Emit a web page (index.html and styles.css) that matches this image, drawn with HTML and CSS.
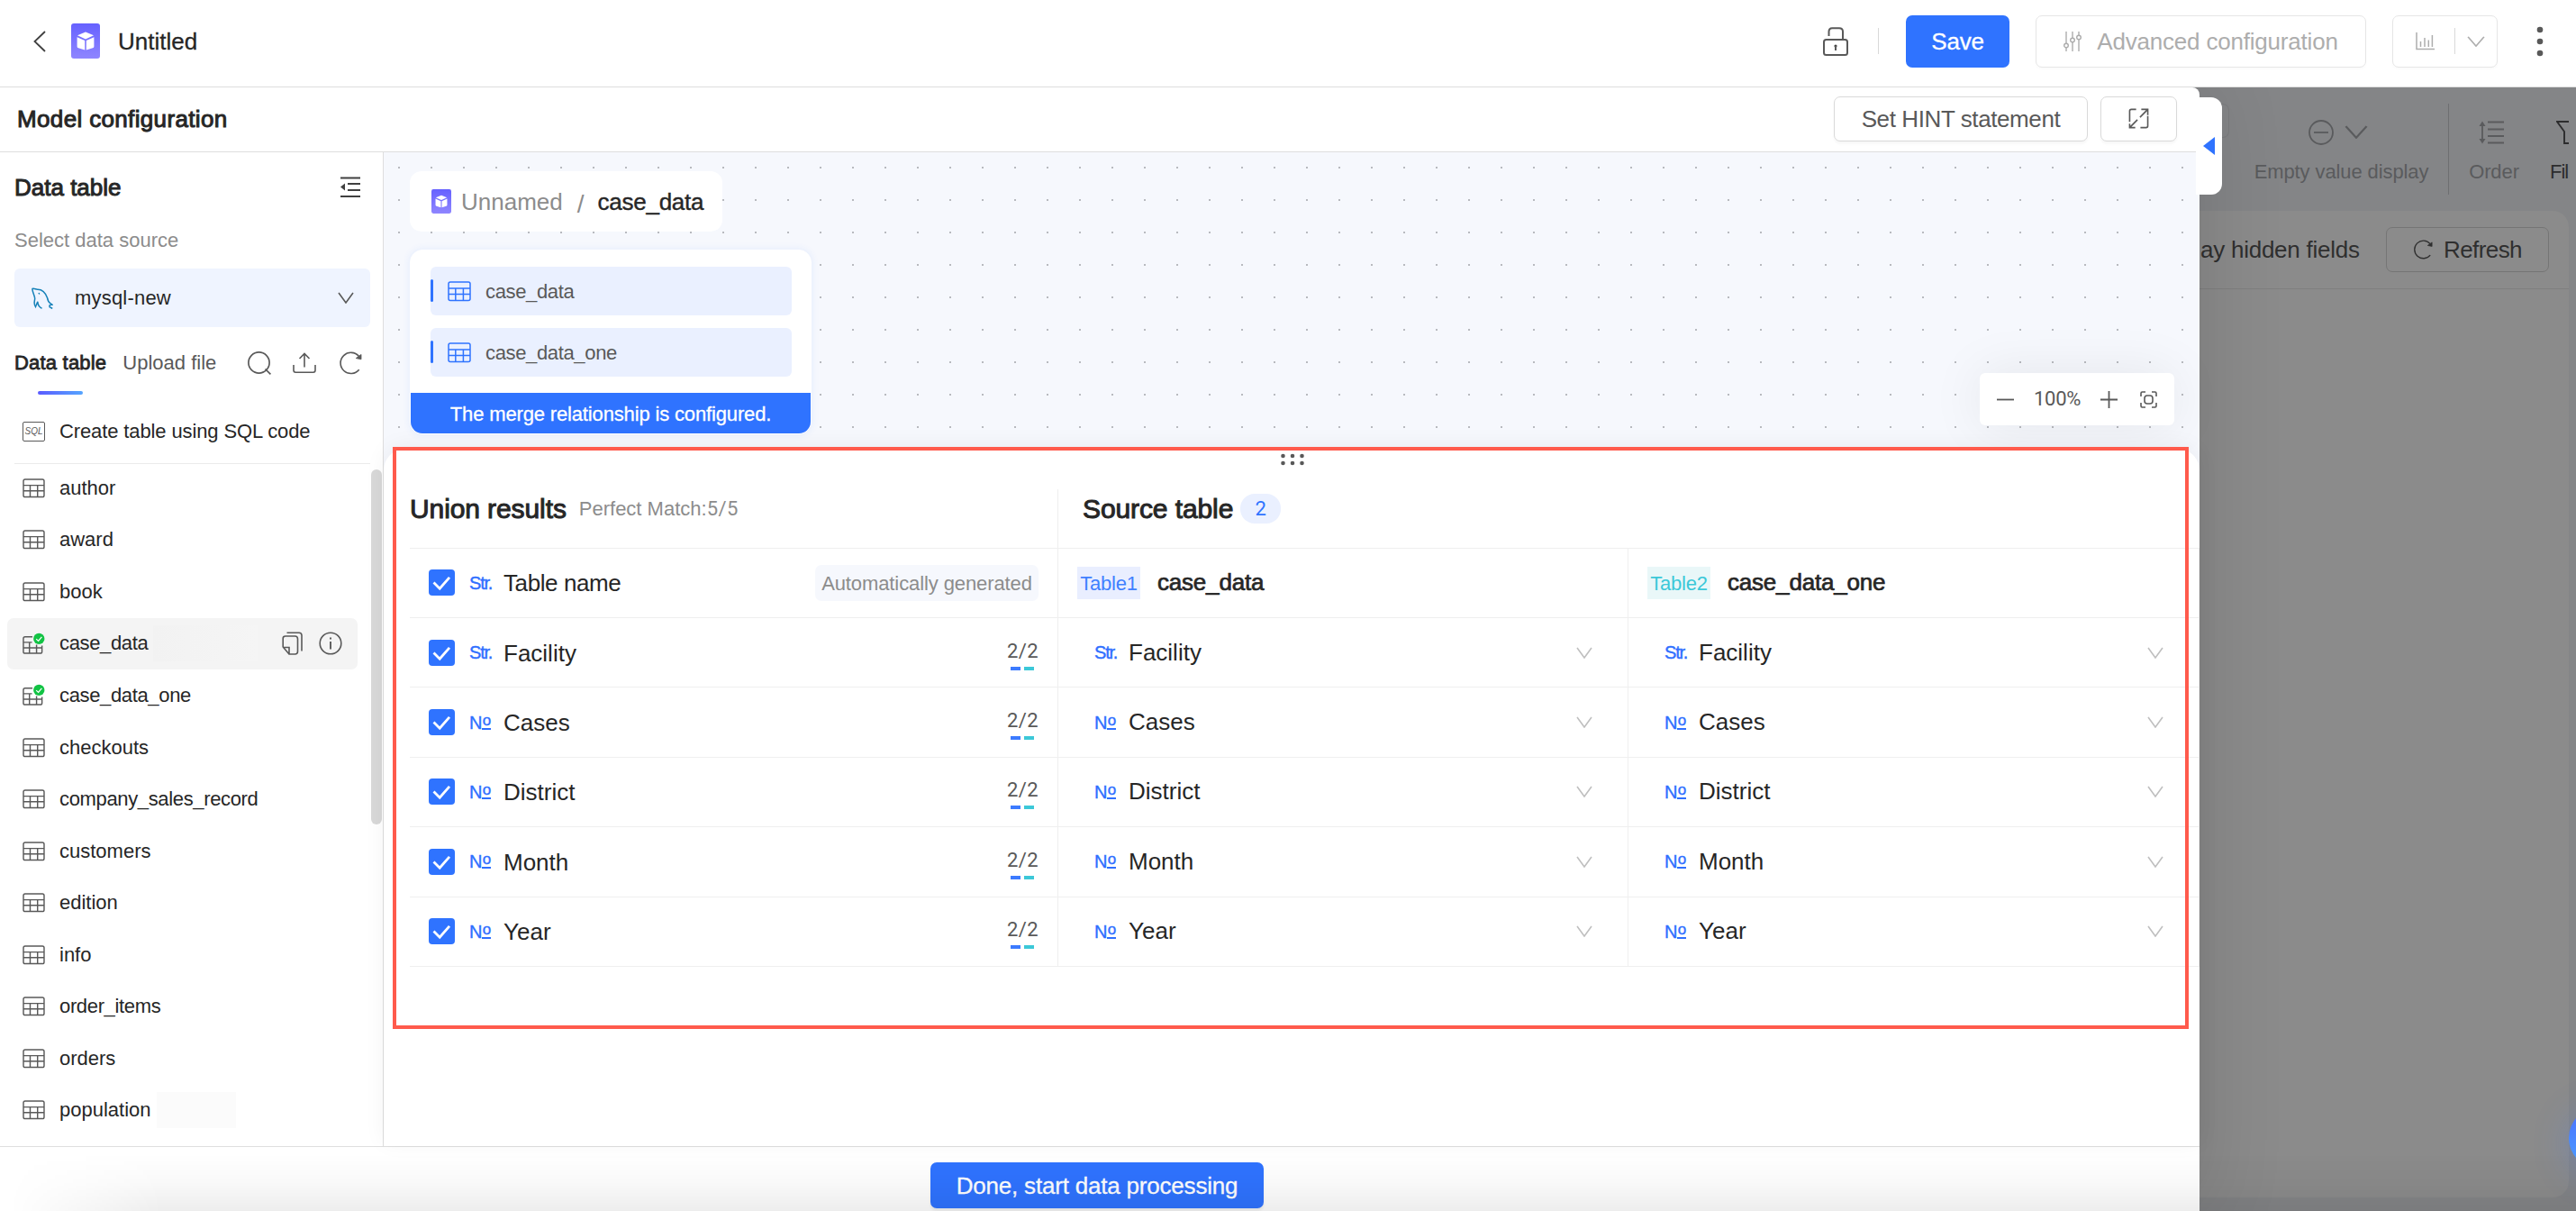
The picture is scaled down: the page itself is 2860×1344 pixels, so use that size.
FILE: index.html
```html
<!DOCTYPE html>
<html lang="en">
<head>
    <meta charset="UTF-8">
    <meta name="viewport" content="width=device-width, initial-scale=1.0">
    <title>Untitled - Model configuration</title>
    <link rel="stylesheet" href="styles.css">
</head>
<body>
    <svg class="symbols" width="0" height="0">
        <defs>
            <linearGradient id="cubeFill" x1="0" y1="0" x2="0" y2="1">
                <stop offset="0" stop-color="#6661ff"/>
                <stop offset="1" stop-color="#8f86ff"/>
            </linearGradient>
        </defs>
        <symbol id="cube" viewBox="0 0 32 39">
            <rect width="32" height="39" rx="3" fill="url(#cubeFill)"/>
            <path d="M16 9.5L25 13.3L16 17.4L7 13.3Z" fill="#fff"/>
            <path d="M6.6 15.2L15.2 19V29.4L8 27.3Q6.6 26.8 6.6 25.4Z M25.4 15.2L16.8 19V29.4L24 27.3Q25.4 26.8 25.4 25.4Z" fill="#fff"/>
        </symbol>
        <symbol id="table" viewBox="0 0 26 23">
            <rect x="1" y="1" width="24" height="20.5" rx="2" fill="none" stroke="currentColor" stroke-width="1.5"/>
            <path d="M1 8H25 M1 14.4H25 M8.8 8V21.5 M17.4 8V21.5" fill="none" stroke="currentColor" stroke-width="1.5"/>
        </symbol>
        <symbol id="table-used" viewBox="0 0 26 26">
            <path d="M11.5 5H3Q1 5 1 7V22Q1 24 3 24H20.5Q22.5 24 22.5 22V15 M1 11.3H11 M1 17.6H22.5 M8 11.3V24 M16.2 14V24" fill="none" stroke="currentColor" stroke-width="1.5"/>
            <circle cx="19" cy="7.2" r="6.4" fill="#12c344"/>
            <path d="M15.8 7.4L18.3 9.8L22.2 5" fill="none" stroke="#fff" stroke-width="1.3"/>
        </symbol>
        <symbol id="down" viewBox="0 0 18 13" preserveAspectRatio="none">
            <path d="M1 1L9 12L17 1" fill="none" stroke="currentColor" stroke-width="1.6"/>
        </symbol>
        <symbol id="reload" viewBox="0 0 26 26">
            <path d="M22.7 20.2A11.6 11.6 0 1 1 22.5 5.4" fill="none" stroke="currentColor" stroke-width="1.6"/>
            <path d="M19.2 7.6L25 3.4V8.8Z" fill="currentColor" stroke="currentColor" stroke-width="0.8"/>
        </symbol>
        <symbol id="check" viewBox="0 0 29 29">
            <path d="M5.5 14.5L12.2 21.2L23 8.8" fill="none" stroke="#fff" stroke-width="2.8"/>
        </symbol>
    </svg>

    <header class="topbar">
        <svg class="back" viewBox="0 0 14 24"><path d="M13 1L1.5 12L13 23" fill="none" stroke="#404040" stroke-width="1.8"/></svg>
        <svg class="logo"><use href="#cube"/></svg>
        <h1 class="doc-title">Untitled</h1>
        <div class="topbar-right">
            <svg class="lock" viewBox="0 0 28 32" fill="none" stroke="#595959" stroke-width="2">
                <path d="M6.5 10V5Q6.5 1.2 10.3 1.2H18Q22 1.2 22 5V14"/>
                <rect x="1" y="14" width="26" height="17" rx="2.5"/>
                <circle cx="14" cy="21" r="1.6" fill="#404040" stroke="none"/>
                <path d="M14 21V26"/>
            </svg>
            <span class="vline"></span>
            <button class="btn btn-primary save">Save</button>
            <button class="btn btn-ghost advanced">
                <svg viewBox="0 0 20 22" fill="none" stroke="currentColor" stroke-width="1.4">
                    <path d="M3 0V13 M3 18V22 M10 0V7 M10 12V22 M17 0V4 M17 9V22"/>
                    <circle cx="3" cy="15.5" r="2.3"/><circle cx="10" cy="9.5" r="2.3"/><circle cx="17" cy="6.5" r="2.3"/>
                </svg>
                Advanced configuration
            </button>
            <div class="btn btn-ghost chart-group">
                <svg class="chart" viewBox="0 0 21 20" fill="none" stroke="currentColor" stroke-width="1.5"><path d="M1 0V18.5H21 M5.5 10V16 M10 6V16 M14.3 8.5V16 M18.4 3V16"/></svg>
                <span class="vline"></span>
                <svg class="chart-down"><use href="#down"/></svg>
            </div>
            <svg class="more" viewBox="0 0 8 34" fill="#595959"><circle cx="4" cy="4" r="3.3"/><circle cx="4" cy="17" r="3.3"/><circle cx="4" cy="30" r="3.3"/></svg>
        </div>
    </header>

    <div class="stage">
        <section class="drawer">
            <div class="drawer-head">
                <h2>Model configuration</h2>
                <button class="btn btn-default hint">Set HINT statement</button>
                <button class="btn btn-default expand">
                    <svg viewBox="0 0 24 24" fill="none" stroke="#595959" stroke-width="1.7">
                        <path d="M1.5 16V3.5Q1.5 1.5 3.5 1.5H9 M22.5 9V20.5Q22.5 22.5 20.5 22.5H14 M15 1.5H22.5V8 M22.5 1.5L13.5 10.5 M1.5 18V22.5H8 M1.5 22.5L10.5 13.5"/>
                    </svg>
                </button>
            </div>

            <div class="drawer-body">
                <aside class="sidebar">
                    <div class="side-title">
                        <h3>Data table</h3>
                        <svg viewBox="0 0 24 24"><path d="M1 1.5H23 M9 8H23 M9 15H23 M1 22H23" stroke="#404040" stroke-width="2"/><path d="M6 7.5V15.5L1 11.5Z" fill="#404040"/></svg>
                    </div>
                    <p class="side-label">Select data source</p>
                    <div class="source">
                        <svg class="dolphin" viewBox="0 0 24 24" fill="none" stroke="#1580b8" stroke-width="1.5">
                            <path d="M3.5 11C2.5 7 0.5 3.5 1 1.5C2.5 0.6 5 2.3 6.5 2.2C12 2 15.5 6 17.5 11.5C18 14 18.5 16 20.5 17.3L23 19.2L20.2 19.6L20 21.5L23.2 23.5"/>
                            <path d="M3.5 11C4.5 14 2 16 3.5 19.5L4.5 21.5L6.8 15.8C7 19 8.5 22 11.5 23.3"/>
                            <path d="M8 6L8.8 7.5"/>
                        </svg>
                        <span>mysql-new</span>
                        <svg class="source-down"><use href="#down"/></svg>
                    </div>
                    <div class="tabs">
                        <span class="tab active">Data table</span>
                        <span class="tab">Upload file</span>
                        <svg viewBox="0 0 26 26" fill="none" stroke="currentColor" stroke-width="1.7"><circle cx="12.5" cy="12.5" r="11.6"/><path d="M19.5 19.5L25.4 25.4"/></svg>
                        <svg viewBox="0 0 26 26" fill="none" stroke="currentColor" stroke-width="1.6"><path d="M13 17.5V3 M7.5 8L13 2.5L18.5 8 M1 15V21Q1 23.2 3.2 23.2H22.8Q25 23.2 25 21V15"/></svg>
                        <svg><use href="#reload"/></svg>
                    </div>
                    <div class="sql-row">
                        <span class="sql-icon">SQL</span>
                        <span class="sql-text">Create table using SQL code</span>
                    </div>
                    <ul class="tables">
                        <li><svg><use href="#table"/></svg>author</li>
                        <li><svg><use href="#table"/></svg>award</li>
                        <li><svg><use href="#table"/></svg>book</li>
                        <li class="current">
                            <svg class="used"><use href="#table-used"/></svg><span class="snake">case_data</span>
                            <span class="mask mask-current"></span>
                            <svg class="copy" viewBox="0 0 24 26" fill="none" stroke="currentColor" stroke-width="1.6"><path d="M5.5 1.2H19Q22 1.2 22 4.2V21.5 M1.2 7.5V17L8 25H14.5Q17.5 25 17.5 22V8Q17.5 5 14.5 5H4Q1.2 5 1.2 7.5Z M1.2 17.5H8V25"/></svg>
                            <svg class="info" viewBox="0 0 26 26" fill="none" stroke="currentColor" stroke-width="1.6"><circle cx="13" cy="13" r="11.8"/><path d="M13 11V19.5 M13 6.5V8.6" stroke-width="1.9"/></svg>
                        </li>
                        <li><svg class="used"><use href="#table-used"/></svg><span class="snake">case_data_one</span></li>
                        <li><svg><use href="#table"/></svg>checkouts</li>
                        <li><svg><use href="#table"/></svg><span class="snake">company_sales_record</span></li>
                        <li><svg><use href="#table"/></svg>customers</li>
                        <li><svg><use href="#table"/></svg>edition</li>
                        <li><svg><use href="#table"/></svg>info</li>
                        <li><svg><use href="#table"/></svg><span class="snake">order_items</span></li>
                        <li><svg><use href="#table"/></svg>orders</li>
                        <li><svg><use href="#table"/></svg>population<span class="mask mask-population"></span></li>
                    </ul>
                    <span class="scrollbar"></span>
                </aside>

                <main class="workspace">
                    <div class="canvas">
                        <nav class="crumbs">
                            <svg><use href="#cube"/></svg>
                            <span class="crumb-parent">Unnamed</span>
                            <span class="crumb-sep">/</span>
                            <span class="crumb-current">case_data</span>
                        </nav>
                        <div class="union-node">
                            <div class="node-table"><svg><use href="#table"/></svg><span>case_data</span></div>
                            <div class="node-table"><svg><use href="#table"/></svg><span>case_data_one</span></div>
                            <div class="node-status">The merge relationship is configured.</div>
                        </div>
                        <div class="zoom">
                            <svg viewBox="0 0 19 19" stroke="#595959" stroke-width="1.8"><path d="M0 9.5H19"/></svg>
                            <span>100%</span>
                            <svg viewBox="0 0 19 19" stroke="#595959" stroke-width="1.8"><path d="M0 9.5H19 M9.5 0V19"/></svg>
                            <svg viewBox="0 0 19 19" fill="none" stroke="#595959" stroke-width="1.6"><path d="M1 6V2.5Q1 1 2.5 1H6 M13 1H16.5Q18 1 18 2.5V6 M18 13V16.5Q18 18 16.5 18H13 M6 18H2.5Q1 18 1 16.5V13"/><rect x="5" y="5" width="9" height="9" rx="3"/></svg>
                        </div>
                    </div>

                    <div class="panel">
                        <svg class="grip" viewBox="0 0 26 14" fill="#595959"><circle cx="2.5" cy="3" r="2.3"/><circle cx="13" cy="3" r="2.3"/><circle cx="23.5" cy="3" r="2.3"/><circle cx="2.5" cy="11" r="2.3"/><circle cx="13" cy="11" r="2.3"/><circle cx="23.5" cy="11" r="2.3"/></svg>
                        <div class="grid-head">
                            <div class="union-title"><h3>Union results</h3><span>Perfect Match:<span class="din">5/5</span></span></div>
                            <div class="source-title"><h3>Source table</h3><span class="badge">2</span></div>
                        </div>
                        <div class="grid-row head-row">
                            <div class="cell result"><span class="checkbox"><svg><use href="#check"/></svg></span><span class="type str">Str.</span><span class="field table-name">Table name</span><span class="auto">Automatically generated</span></div>
                            <div class="cell title"><span class="tag tag-1">Table1</span>case_data</div>
                            <div class="cell title"><span class="tag tag-2">Table2</span>case_data_one</div>
                        </div>
                        <div class="grid-row">
                            <div class="cell result"><span class="checkbox"><svg><use href="#check"/></svg></span><span class="type str">Str.</span><span class="field">Facility</span><span class="match">2/2<span class="bars"><i></i><i></i></span></span></div>
                            <div class="cell source-field"><span class="type str">Str.</span><span class="field">Facility</span><svg class="pick"><use href="#down"/></svg></div>
                            <div class="cell source-field"><span class="type str">Str.</span><span class="field">Facility</span><svg class="pick"><use href="#down"/></svg></div>
                        </div>
                        <div class="grid-row">
                            <div class="cell result"><span class="checkbox"><svg><use href="#check"/></svg></span><span class="type">N<sup>o</sup></span><span class="field">Cases</span><span class="match">2/2<span class="bars"><i></i><i></i></span></span></div>
                            <div class="cell source-field"><span class="type">N<sup>o</sup></span><span class="field">Cases</span><svg class="pick"><use href="#down"/></svg></div>
                            <div class="cell source-field"><span class="type">N<sup>o</sup></span><span class="field">Cases</span><svg class="pick"><use href="#down"/></svg></div>
                        </div>
                        <div class="grid-row">
                            <div class="cell result"><span class="checkbox"><svg><use href="#check"/></svg></span><span class="type">N<sup>o</sup></span><span class="field">District</span><span class="match">2/2<span class="bars"><i></i><i></i></span></span></div>
                            <div class="cell source-field"><span class="type">N<sup>o</sup></span><span class="field">District</span><svg class="pick"><use href="#down"/></svg></div>
                            <div class="cell source-field"><span class="type">N<sup>o</sup></span><span class="field">District</span><svg class="pick"><use href="#down"/></svg></div>
                        </div>
                        <div class="grid-row">
                            <div class="cell result"><span class="checkbox"><svg><use href="#check"/></svg></span><span class="type">N<sup>o</sup></span><span class="field">Month</span><span class="match">2/2<span class="bars"><i></i><i></i></span></span></div>
                            <div class="cell source-field"><span class="type">N<sup>o</sup></span><span class="field">Month</span><svg class="pick"><use href="#down"/></svg></div>
                            <div class="cell source-field"><span class="type">N<sup>o</sup></span><span class="field">Month</span><svg class="pick"><use href="#down"/></svg></div>
                        </div>
                        <div class="grid-row">
                            <div class="cell result"><span class="checkbox"><svg><use href="#check"/></svg></span><span class="type">N<sup>o</sup></span><span class="field">Year</span><span class="match">2/2<span class="bars"><i></i><i></i></span></span></div>
                            <div class="cell source-field"><span class="type">N<sup>o</sup></span><span class="field">Year</span><svg class="pick"><use href="#down"/></svg></div>
                            <div class="cell source-field"><span class="type">N<sup>o</sup></span><span class="field">Year</span><svg class="pick"><use href="#down"/></svg></div>
                        </div>
                    </div>
                    <div class="highlight"></div>
                </main>
            </div>

            <footer class="drawer-foot">
                <button class="btn btn-primary done">Done, start data processing</button>
            </footer>
            <div class="handle"><svg viewBox="0 0 13 20"><path d="M13 0V20L0 10Z" fill="#2f73ff"/></svg></div>
        </section>

        <section class="backdrop">
            <div class="tools">
                <span class="tool-edge"></span>
                <div class="tool empty-value">
                    <div class="tool-icons">
                        <svg class="minus" viewBox="0 0 28 28" fill="none" stroke="currentColor" stroke-width="1.8"><circle cx="14" cy="14" r="13"/><path d="M6 14H22"/></svg>
                        <svg class="tool-down"><use href="#down"/></svg>
                    </div>
                    <span>Empty value display</span>
                </div>
                <div class="tool order">
                    <div class="tool-icons"><svg viewBox="0 0 28 26" fill="none" stroke="currentColor" stroke-width="1.8"><path d="M4 2V24 M10 1.5H28 M10 9.5H28 M10 17H28 M10 24.5H28"/><path d="M0.5 6L4 0.5L7.5 6Z M0.5 20L4 25.5L7.5 20Z" fill="currentColor" stroke="none"/></svg></div>
                    <span>Order</span>
                </div>
                <div class="tool filter">
                    <div class="tool-icons"><svg viewBox="0 0 26 26" fill="none" stroke="currentColor" stroke-width="1.9"><path d="M25 1H1L9 12V25H17V12L25 1"/></svg></div>
                    <span>Fil</span>
                </div>
            </div>
            <div class="board">
                <div class="board-head">
                    <span class="hidden-fields">ay hidden fields</span>
                    <button class="btn refresh"><svg><use href="#reload"/></svg>Refresh</button>
                </div>
            </div>
            <span class="assistant"></span>
        </section>
        <div class="bottom-shade"></div>
    </div>
</body>
</html>
```

FILE: styles.css
```css
* {
    box-sizing: border-box;
}
body {
    margin: 0;
    width: 2860px;
    height: 1344px;
    overflow: hidden;
    background: #fff;
    color: #262626;
    font-family: "Liberation Sans", Arial, sans-serif;
    font-size: 22px;
    line-height: 1.2;
    white-space: nowrap;
}
h1, h2, h3, p, ul {
    margin: 0;
    padding: 0;
    font-weight: 400;
}
h2, h3 {
    font-size: 26px;
    -webkit-text-stroke: 1px currentColor;
}
svg {
    display: block;
    flex: none;
}
.symbols {
    position: absolute;
}

/* buttons */
.btn {
    display: flex;
    align-items: center;
    justify-content: center;
    flex: none;
    padding: 0;
    border: 1px solid #d9d9d9;
    border-radius: 7px;
    background: #fff;
    color: #595959;
    font-family: inherit;
    font-size: 26px;
    line-height: 1;
}
.btn-primary {
    border: none;
    background: #2f73ff;
    color: #fff;
    letter-spacing: -0.2px;
    -webkit-text-stroke: 0.3px currentColor;
}
.btn-ghost {
    border-color: #e6e6e6;
    color: #adadad;
    box-shadow: 0 2px 3px rgba(0, 0, 0, 0.02);
}
.btn-default {
    height: 50px;
    box-shadow: 0 3px 3px rgba(0, 0, 0, 0.03);
}

/* top bar */
.topbar {
    position: relative;
    z-index: 3;
    display: flex;
    align-items: center;
    height: 97px;
    padding: 0 36px 5px 37px;
    border-bottom: 1px solid #dedede;
    background: #fff;
}
.back {
    width: 14px;
    height: 24px;
}
.logo {
    width: 32px;
    height: 39px;
    margin: 0 20px 0 28px;
}
.doc-title {
    padding-top: 2px;
    font-size: 26px;
    -webkit-text-stroke: 0.3px currentColor;
}
.topbar-right {
    display: flex;
    align-items: center;
    margin-left: auto;
}
.vline {
    flex: none;
    width: 1px;
    height: 29px;
    background: #d9d9d9;
}
.lock {
    width: 28px;
    height: 32px;
    margin-right: 33px;
}
.save {
    width: 115px;
    height: 58px;
    margin-left: 30px;
}
.advanced {
    width: 367px;
    height: 58px;
    margin: 0 29px;
    gap: 17px;
    letter-spacing: -0.2px;
}
.advanced svg {
    width: 20px;
    height: 22px;
}
.chart-group {
    width: 117px;
    height: 58px;
    justify-content: flex-start;
    padding-left: 25px;
}
.chart {
    width: 21px;
    height: 20px;
    margin-right: 22px;
}
.chart-down {
    width: 20px;
    height: 12px;
    margin-left: 13px;
}
.more {
    width: 8px;
    height: 34px;
    margin-left: 43px;
}

/* drawer */
.stage {
    position: relative;
    display: flex;
    height: 1247px;
    background: #848587;
}
.drawer {
    position: relative;
    z-index: 1;
    display: flex;
    flex-direction: column;
    flex: none;
    width: 2442px;
    border-top-right-radius: 8px;
    background: #fff;
    box-shadow: 8px 0 90px rgba(0, 0, 0, 0.12);
}
.drawer-head {
    display: flex;
    align-items: center;
    height: 72px;
    padding: 0 25px 2px 19px;
    border-bottom: 1px solid #dedede;
}
.drawer-head h2 {
    margin-right: auto;
    padding-top: 2px;
    letter-spacing: 0.35px;
}
.hint {
    width: 282px;
    margin-right: 14px;
    padding-top: 1px;
    letter-spacing: -0.4px;
}
.expand {
    width: 85px;
}
.expand svg {
    width: 23px;
    height: 23px;
}
.drawer-body {
    display: flex;
    height: 1103px;
}
.drawer-foot {
    display: flex;
    justify-content: center;
    align-items: flex-start;
    height: 72px;
    padding: 17px 6px 0 0;
    border-top: 1px solid #dedede;
}
.done {
    width: 370px;
    height: 51px;
    box-shadow: 0 3px 3px rgba(0, 0, 0, 0.06);
}
.handle {
    position: absolute;
    top: 11px;
    right: -25px;
    display: flex;
    align-items: center;
    width: 29px;
    height: 108px;
    padding: 0 0 0 8px;
    border-radius: 0 12px 12px 0;
    background: #fff;
}
.handle svg {
    width: 13px;
    height: 20px;
}

/* sidebar */
.sidebar {
    position: relative;
    flex: none;
    width: 426px;
    padding: 23px 14px 0 16px;
    border-right: 1px solid #dedede;
}
.side-title {
    display: flex;
    justify-content: space-between;
    align-items: center;
    height: 32px;
    padding-right: 10px;
}
.side-title h3 {
    padding-top: 2px;
}
.side-title svg {
    width: 24px;
    height: 24px;
}
.side-label {
    margin-top: 30px;
    color: #8c8c8c;
}
.source {
    display: flex;
    align-items: center;
    height: 65px;
    margin-top: 18px;
    padding: 0 18px 0 19px;
    border-radius: 6px;
    background: #eff4ff;
}
.dolphin {
    width: 24px;
    height: 24px;
    margin-right: 24px;
}
.source span {
    letter-spacing: 0.2px;
}
.source-down {
    width: 18px;
    height: 13px;
    margin-left: auto;
    color: #595959;
}
.tabs {
    display: flex;
    align-items: center;
    height: 73px;
    margin-top: 3px;
    padding-right: 9px;
    color: #595959;
}
.tab {
    position: relative;
    margin-right: 18px;
}
.tab.active {
    color: #262626;
    letter-spacing: 0.2px;
    -webkit-text-stroke: 0.8px currentColor;
}
.tab.active::after {
    content: "";
    position: absolute;
    top: 44px;
    left: 26px;
    width: 50px;
    height: 4px;
    border-radius: 2px;
    background: linear-gradient(90deg, #5b5bff, #55a5ff);
}
.tabs svg {
    width: 26px;
    height: 26px;
    margin-right: 25px;
}
.tabs .tab + svg {
    margin: 0 24px 0 auto;
}
.tabs svg:last-child {
    margin-right: 0;
}
.sql-row {
    display: flex;
    align-items: center;
    height: 76px;
    padding: 5px 0 0 9px;
    border-bottom: 1px solid #ebebeb;
}
.sql-icon {
    display: flex;
    align-items: center;
    justify-content: center;
    width: 25px;
    height: 22px;
    margin-right: 16px;
    border: 1.5px solid #595959;
    border-radius: 2px;
    color: #595959;
    font-size: 10px;
    font-style: italic;
}
.sql-text {
    letter-spacing: -0.12px;
}
.tables {
    margin: -2.4px -1px 0 -8px;
    list-style: none;
}
.tables li {
    position: relative;
    display: flex;
    align-items: center;
    width: 389px;
    height: 57.55px;
    padding-left: 17px;
    border-radius: 7px;
    line-height: 28px;
}
.tables li.current {
    background: #f4f4f4;
}
.tables svg {
    width: 25px;
    height: 22px;
    margin-right: 16px;
    color: #595959;
}
.tables svg.used {
    height: 25px;
}
.snake {
    letter-spacing: -0.35px;
}
.mask {
    width: 88px;
    height: 40px;
    margin-left: 6px;
    background: #fbfbfb;
}
.mask-current {
    width: 116px;
    background: linear-gradient(90deg, #f2f2f2, #f5f5f5);
}
.tables svg.copy {
    width: 24px;
    height: 26px;
    margin: 0 17px 0 auto;
}
.tables svg.info {
    width: 26px;
    height: 26px;
    margin-right: 17px;
}
.scrollbar {
    position: absolute;
    top: 352px;
    right: 1px;
    width: 12px;
    height: 394px;
    border-radius: 6px;
    background: #d8d8d8;
}

/* canvas */
.workspace {
    position: relative;
    flex: 1;
    display: flex;
    flex-direction: column;
    background: #f6f8fd;
}
.canvas {
    position: relative;
    height: 329px;
    padding: 21px 28px 0 29px;
    background-color: #f6f8fd;
    background-image: conic-gradient(from 90deg at 34px 34px, #b8babf 90deg, transparent 0);
    background-size: 36px 36px;
    background-position: -18px -18px;
}
.crumbs {
    display: flex;
    align-items: center;
    width: 347px;
    height: 67px;
    padding-left: 24px;
    border-radius: 13px;
    background: #fff;
    font-size: 26px;
}
.crumbs svg {
    width: 22px;
    height: 27px;
}
.crumb-parent {
    margin-left: 11px;
    padding-top: 2px;
    color: #8c8c8c;
}
.crumb-sep {
    margin: 6px 15px 0 16px;
    color: #8c8c8c;
    font-size: 28px;
}
.crumb-current {
    padding-top: 2px;
    letter-spacing: -0.25px;
    -webkit-text-stroke: 0.4px currentColor;
}
.union-node {
    width: 446px;
    margin-top: 20px;
    padding: 18px 0 0;
    border: 1px solid #fff;
    border-radius: 14px;
    background: #fff;
    box-shadow: 0 0 8px rgba(47, 115, 255, 0.1);
    overflow: hidden;
}
.node-table {
    position: relative;
    display: flex;
    align-items: center;
    width: 401px;
    height: 54px;
    margin: 0 0 14px 22px;
    padding: 0 0 0 19px;
    border-radius: 6px;
    background: #eaf0ff;
    color: #595959;
    letter-spacing: -0.35px;
}
.node-table::before {
    content: "";
    position: absolute;
    top: 14px;
    left: 0;
    width: 3px;
    height: 25px;
    border-radius: 2px;
    background: #2f73ff;
}
.node-table span {
    padding-top: 2px;
}
.node-table svg {
    width: 26px;
    height: 23px;
    margin-right: 16px;
    color: #2f73ff;
}
.node-status {
    height: 45px;
    margin-top: 18px;
    background: #2f73ff;
    color: #fff;
    letter-spacing: -0.15px;
    line-height: 47px;
    text-align: center;
    -webkit-text-stroke: 0.3px currentColor;
}
.zoom {
    position: absolute;
    top: 245px;
    right: 28px;
    display: flex;
    align-items: center;
    width: 216px;
    height: 58px;
    padding-left: 19px;
    border-radius: 6px;
    background: #fff;
    box-shadow: 0 0 60px rgba(0, 0, 0, 0.08);
    color: #595959;
    font-family: Roboto, sans-serif;
}
.zoom svg {
    width: 19px;
    height: 19px;
}
.zoom span {
    width: 52px;
    margin: 0 22px 0 22px;
    letter-spacing: -0.3px;
}
.zoom svg:last-child {
    margin-left: 25px;
}

/* union panel */
.panel {
    position: relative;
    height: 774px;
    padding: 6px 0 0 29px;
    border-radius: 24px 24px 0 0;
    background: #fff;
    box-shadow: 0 -4px 24px rgba(0, 0, 0, 0.05);
}
.grip {
    width: 26px;
    height: 14px;
    margin: -1px 0 0 967px;
}
.grid-head {
    display: grid;
    grid-template-columns: 720px 1fr;
    height: 66px;
    margin-top: 25.6px;
    border-bottom: 1px solid #efefef;
}
.grid-head h3 {
    font-size: 30px;
    line-height: 44px;
    letter-spacing: -0.1px;
}
.union-title, .source-title {
    display: flex;
    align-items: flex-start;
}
.union-title {
    border-right: 1px solid #efefef;
    color: #8c8c8c;
    line-height: 44px;
}
.union-title h3 {
    margin-right: 14px;
    color: #262626;
}
.din {
    font-family: Roboto, sans-serif;
    letter-spacing: 0.5px;
}
.source-title {
    padding-left: 27px;
}
.badge {
    width: 45px;
    height: 33px;
    margin: 5px 0 0 8px;
    border-radius: 16px;
    background: #eaf0ff;
    color: #2f73ff;
    font-family: Roboto, sans-serif;
    line-height: 33px;
    text-align: center;
}
.grid-row {
    display: grid;
    grid-template-columns: 720px 633px 634px;
    height: 77.4px;
    border-bottom: 1px solid #efefef;
}
.cell {
    display: flex;
    align-items: center;
    border-right: 1px solid #efefef;
    font-size: 26px;
}
.result {
    padding: 0 21px 0 21px;
}
.checkbox {
    width: 29px;
    height: 29px;
    margin-right: 16px;
    border-radius: 4px;
    background: #2f73ff;
}
.checkbox svg {
    width: 29px;
    height: 29px;
}
.type {
    width: 38px;
    color: #2f6fff;
    font-size: 20px;
    line-height: 24px;
    -webkit-text-stroke: 0.4px currentColor;
}
.type.str {
    letter-spacing: -1.2px;
}
.type sup {
    display: inline-block;
    width: 10px;
    padding-bottom: 2px;
    border-bottom: 2px solid currentColor;
    font-size: 17px;
    line-height: 12px;
    text-align: center;
    vertical-align: 4px;
}
.field {
    padding-top: 2px;
}
.table-name {
    padding-top: 1px;
    letter-spacing: -0.4px;
}
.auto {
    width: 248px;
    height: 40px;
    margin-left: auto;
    border-radius: 7px;
    background: #f6f8fd;
    color: #8c8c8c;
    font-size: 22px;
    letter-spacing: -0.1px;
    line-height: 41px;
    text-align: center;
}
.match {
    display: flex;
    flex-direction: column;
    align-items: center;
    margin-left: auto;
    padding-top: 5px;
    color: #595959;
    font-family: Roboto, sans-serif;
    font-size: 22px;
    letter-spacing: 0.4px;
    line-height: 26px;
}
.bars {
    display: flex;
    gap: 4px;
    margin-top: 4px;
}
.bars i {
    width: 11px;
    height: 4px;
    background: #3c7bff;
}
.bars i + i {
    background: #3cc8d8;
}
.title {
    padding-left: 21px;
    letter-spacing: -0.2px;
    -webkit-text-stroke: 0.7px currentColor;
}
.tag {
    width: 70px;
    height: 36px;
    margin-right: 19px;
    font-size: 22px;
    line-height: 37px;
    text-align: center;
    -webkit-text-stroke: 0;
}
.tag-1 {
    background: #e9eeff;
    color: #4080ff;
}
.tag-2 {
    background: #e9f7f8;
    color: #3cc8d8;
}
.source-field {
    padding: 0 39px 0 40px;
}
.source-field .field {
    padding-top: 0;
}
.pick {
    width: 18px;
    height: 13px;
    margin-left: auto;
    color: #bfbfbf;
}
.highlight {
    position: absolute;
    top: 327px;
    left: 10px;
    width: 1994px;
    height: 646px;
    border: 4px solid #ff5a4c;
}

/* dimmed page behind the drawer */
.backdrop {
    position: relative;
    flex: 1;
    padding-right: 8px;
    overflow: hidden;
}
.tools {
    display: flex;
    height: 137px;
    padding-top: 18px;
    overflow: hidden;
    color: #5a5b5d;
}
.tool-edge {
    flex: none;
    width: 33px;
    height: 38px;
    border: 1px solid #7b7c7e;
    border-left: none;
    border-radius: 0 7px 7px 0;
}
.tool {
    display: flex;
    flex-direction: column;
    align-items: center;
    flex: none;
    height: 101px;
    letter-spacing: -0.1px;
}
.tool-icons {
    display: flex;
    align-items: center;
    gap: 12px;
    height: 63px;
}
.empty-value {
    width: 244px;
    padding-left: 6px;
    border-right: 1px solid #6e6f71;
}
.empty-value .tool-icons {
    padding-right: 7px;
}
.minus {
    width: 28px;
    height: 28px;
}
.tool-down {
    width: 26px;
    height: 15px;
}
.order {
    width: 100px;
}
.order .tool-icons {
    padding-right: 6px;
}
.order svg {
    width: 28px;
    height: 26px;
}
.filter {
    align-items: flex-start;
    margin-left: 12px;
    color: #2c2c2d;
    letter-spacing: -1px;
}
.filter svg {
    width: 26px;
    height: 26px;
    margin-left: 7px;
}
.board {
    height: 1095px;
    border-radius: 0 18px 18px 0;
    background: #8b8b8b;
}
.board-head {
    display: flex;
    align-items: center;
    height: 87px;
    padding: 0 22px 1px 1px;
    border-bottom: 1px solid #7f7f7f;
    color: #2f2f2f;
    font-size: 26px;
}
.hidden-fields {
    padding-top: 2px;
    letter-spacing: -0.25px;
}
.refresh {
    gap: 12px;
    width: 181px;
    height: 50px;
    margin-left: auto;
    border-color: #757575;
    background: none;
    color: #2f2f2f;
    letter-spacing: -0.6px;
}
.refresh svg {
    width: 22px;
    height: 24px;
}
.assistant {
    position: absolute;
    top: 1132px;
    left: 410px;
    width: 68px;
    height: 68px;
    border-radius: 50%;
    background: linear-gradient(#4c6fff, #4a9fff);
    box-shadow: 0 6px 40px rgba(74, 130, 255, 0.3);
}
.bottom-shade {
    position: absolute;
    z-index: 2;
    right: 0;
    bottom: 0;
    left: 0;
    height: 64px;
    background: linear-gradient(rgba(0, 0, 0, 0), rgba(0, 0, 0, 0.025) 50%, rgba(0, 0, 0, 0.07));
    -webkit-mask-image: linear-gradient(90deg, transparent 10px, #000 180px);
    mask-image: linear-gradient(90deg, transparent 10px, #000 180px);
}
```
